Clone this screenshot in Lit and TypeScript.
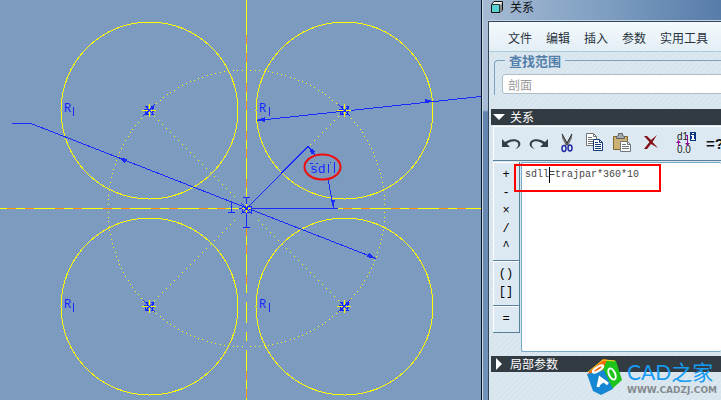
import { LitElement, html, svg, css } from "lit";
import { customElement } from "lit/decorators.js";

const CENTERS = [
  [149, 110],
  [344, 110],
  [149, 306],
  [344, 306],
];

const dot = (x: number, y: number) => `M${Math.round(x)} ${Math.round(y)}.5h1`;

function constructionDots(): string {
  const dots: string[] = [];
  const steps = 196;
  for (let i = 0; i < steps; i++) {
    const a = (i / steps) * Math.PI * 2;
    dots.push(dot(246 + 138.5 * Math.cos(a), 208 + 138.5 * Math.sin(a)));
  }
  for (let d = 12; d < 96; d += 4) {
    dots.push(dot(246 + d, 208 + d), dot(246 - d, 208 - d));
    dots.push(dot(246 + d, 208 - d), dot(246 - d, 208 + d));
  }
  return dots.join("");
}

@customElement("sketch-canvas")
class SketchCanvas extends LitElement {
  static styles = css`
    :host { display: block; overflow: hidden; background: #7d9abf; }
    svg { display: block; shape-rendering: crispEdges; fill: none; }
    .yellow { stroke: #ffff00; }
    .orange { stroke: #ff9900; }
    .blue { stroke: #1a2aff; }
    .arrow { fill: #1a2aff; }
    .red { stroke: #f20d0d; stroke-width: 2; shape-rendering: auto; }
    .base { stroke: #7d9abf; stroke-width: 3; }
    text { fill: #1a2aff; font: 12px "Liberation Mono", monospace; }
    .dim { font-size: 13px; }
  `;

  render() {
    return html`
      <svg width="721" height="400" viewBox="0 0 721 400" role="img" aria-label="Sketch">
        <g class="yellow">
          ${CENTERS.map(([x, y]) => svg`<circle cx=${x + 0.5} cy=${y + 0.5} r="88.5" />`)}
          <path d=${constructionDots()} />
          <path d="M0 208.5H721M246.5 0V400" />
        </g>
        <path class="orange" stroke-dasharray="9 9 9 21" d="M7 208.5H721M246.5 35V290M246.5 371V400" />
        <path class="base" d="M246.5 293V302M246.5 323V332M246.5 341V350" />
        <g class="blue">
          <path d="M12 123.5H31L376 258.5" />
          <path d="M257 120.5 L490 95.5" />
          <path d="M308 146.5 246.5 208.5H338" />
          <path d="M308 146.5 316 156M328 179 333.5 208" />
          <path d="M231.5 202V212M228 212.5H235M243 197.5H250M246.5 198V228M243 227.5H250" />
          <path d="M239 208.5H254M241 203 252 214M252 203 241 214M242 206H251V212H242Z" />
          ${CENTERS.map(
            ([x, y], i) => svg`<g transform="translate(${x} ${y})">
              <path d=${i === 1 || i === 2 ? "M-6-6 6 6" : "M-6 6 6-6"} />
              <path d="M-4-4H-1M2-4H4V-1M-4 1V4H0M2 4H5M-5-1H-2M3 1H5M-3-3 4 4M-3 4 4-3M-2-4V4M3-4V5" />
            </g>`,
          )}
        </g>
        <g class="yellow">
          ${CENTERS.map(
            ([x, y]) => svg`<path transform="translate(${x} ${y})" d="M-7 .5H-1M2 .5H7M.5-6V-1M.5 2V7" />`,
          )}
          <path d="M246.5 204V207M246.5 210V213M242 208.5H245M248 208.5H251" />
        </g>
        <path
          class="arrow"
          d="M257 120 265 117V122ZM433 101 425 99V103ZM118 157 127 159 125 163ZM376 259 367 257 369 253ZM308 146 315 151 312 155ZM333 208 331 200H335Z"
        />
        ${CENTERS.map(
          ([x, y]) => svg`<text x=${x < 200 ? 64 : 259} y=${y + 2}>R</text>
            <path class="blue" d="M${x < 200 ? 73.5 : 269.5} ${y - 3}v9" />`,
        )}
        <text class="dim" x="310" y="173">sd</text>
        <path class="blue" d="M328.5 164V173M334.5 162V173M310 163.5H313M316 163.5H318M330 162.5H331" />
        <ellipse class="red" cx="322.5" cy="167" rx="18" ry="12.5" />
      </svg>
    `;
  }
}

const ICONS = {
  undo: svg`<path fill="#333d47" d="M2 7V15H10L7 12C10 9 16 8 18 11C19 14 17 16 15 17C20 16 22 12 19 9C16 6 9 7 5 10Z"/>`,
  redo: svg`<path fill="#333d47" d="M20 7V15H12L15 12C12 9 6 8 4 11C3 14 5 16 7 17C2 16 0 12 3 9C6 6 13 7 17 10Z"/>`,
  cut: svg`<path fill="#777" d="M6 1 12 12 10 14 6 6ZM16 1 10 12 12 14 16 6Z"/><path stroke="#333" d="M6 2 12 13M16 2 10 13"/>
    <g stroke="#2029a0" stroke-width="1.5"><ellipse cx="8" cy="16.5" rx="2" ry="3"/><ellipse cx="14" cy="16" rx="2" ry="3"/></g>`,
  copy: svg`<path fill="#fff" stroke="#707478" d="M2.5 1.5H9.5L12.5 4.5V13.5H2.5Z"/><path stroke="#707478" d="M9.5 1.5V4.5H12.5M4 5.5H8M4 7.5H9M4 9.5H9M4 11.5H9"/>
    <path fill="#fff" stroke="#123a78" d="M9.5 7.5H15.5L18.5 10.5V18.5H9.5Z"/><path stroke="#123a78" d="M15.5 7.5V10.5H18.5M11 10.5H14M11 12.5H17M11 14.5H17M11 16.5H17"/>`,
  paste: svg`<path fill="#cbb173" stroke="#80652f" d="M1.5 4.5H15.5V17.5H1.5Z"/><path fill="#a6aaae" stroke="#5c6268" d="M4.5 6.5V4.5L6.5 3.5V1.5H10.5V3.5L12.5 4.5V6.5Z"/>
    <path fill="#fff" stroke="#70777d" d="M8.5 9.5H15.5L18.5 12.5V19.5H8.5Z"/><path stroke="#70777d" d="M15.5 9.5V12.5H18.5M10 12.5H14M10 14.5H17M10 16.5H17"/>`,
  remove: svg`<path fill="#850d14" d="M4 4H7L11 8 17 3 12.5 10 18 16 11 12 7 17H4L9.5 10Z"/>`,
};

type IconName = keyof typeof ICONS;

const TOOLS: [IconName, string][] = [
  ["undo", "撤消"],
  ["redo", "重做"],
  ["cut", "剪切"],
  ["copy", "复制"],
  ["paste", "粘贴"],
  ["remove", "删除"],
];

@customElement("relations-dialog")
class RelationsDialog extends LitElement {
  static styles = css`
    :host {
      display: flex;
      flex-direction: column;
      box-sizing: border-box;
      overflow: hidden;
      border-left: 1px solid #0b141e;
      background: linear-gradient(90deg, #a6bbd3, #7f9fc2 50%, #587ca9) top / 100% 20px no-repeat,
        linear-gradient(#a9bdd5, #a7bbd3 110px, #6384ae 112px, #7392b7);
      box-shadow: inset 1px 0 #c8d9ea;
      padding-left: 6px;
      font: 12px/16px "Noto Sans CJK SC", sans-serif;
      color: #27323b;
    }
    button, input, textarea { font: inherit; color: inherit; border: 0; padding: 0; margin: 0; background: none; outline: 0; }
    svg { display: block; fill: none; flex: none; }
    .title { display: flex; align-items: flex-start; gap: 6px; height: 20px; padding-left: 2px; color: #111; line-height: 14px; border-bottom: 1px solid #c3d3e3; white-space: nowrap; }
    h1, h2 { font: inherit; margin: 0; }
    .body {
      flex: 1;
      min-height: 0;
      overflow: hidden;
      border: solid #33475b;
      border-width: 1px 0 0 1px;
      background: repeating-linear-gradient(135deg, #d7e4ee 0 2px, #dce8f0 2px 4px);
    }
    .menu {
      display: flex;
      gap: 14px;
      height: 29px;
      padding-left: 19px;
      border-bottom: 1px solid #a9cad9;
      background: linear-gradient(#f4fafd, #e3eef5);
      overflow: hidden;
    }
    .menu button, h2, h1 { white-space: nowrap; }
    .menu button { padding-top: 2px; flex: none; }
    fieldset {
      margin: 0 -8px 14px 5px;
      height: 43px;
      box-sizing: border-box;
      min-width: 0;
      padding: 5px 0 0 7px;
      border: 1px solid #7ba2c1;
      border-bottom: 0;
      border-radius: 4px 4px 0 0;
    }
    legend { padding: 0 4px; margin-left: 3px; color: #527ea9; font-weight: bold; font-size: 13px; line-height: 17px; }
    .range { display: block; box-sizing: border-box; width: 100%; height: 20px; padding-left: 5px; border: 1px solid #aebcc4; border-radius: 3px; background: #fff; }
    .range::placeholder { color: #999; opacity: 1; }
    .section { display: flex; align-items: center; gap: 5px; height: 16px; margin-left: 2px; padding-left: 2px; background: #323b42; color: #fff; }
    .tools {
      display: flex;
      align-items: center;
      height: 34px;
      margin: 1px 0 1px 4px;
      padding-left: 4px;
      border: solid #568097;
      border-width: 0 0 1px;
      box-shadow: inset 1px 1px #fff;
      background: #dce9f2;
    }
    .tools button { display: grid; place-items: center; flex: none; width: 28px; height: 30px; }
    .tools .values { margin-left: 4px; }
    .split { align-self: stretch; width: 1px; margin-left: 3px; background: #568097; box-shadow: 1px 0 #fff; }
    .work { display: flex; align-items: flex-start; gap: 1px; margin: 1px 0 4px 4px; }
    .ops { flex: none; width: 27px; }
    .group {
      display: flex;
      flex-direction: column;
      padding: 4px 0;
      border: solid #568097;
      border-width: 0 1px 1px 0;
      box-shadow: inset 1px 1px #fff;
      background: #dce9f2;
      color: #000;
      font: 12px/18px "Liberation Mono", monospace;
    }
    .editor { position: relative; flex: 1; min-width: 0; height: 190px; box-sizing: border-box; border: solid #75abca; border-width: 1px 0 1px 1px; border-radius: 2px; background: #fff; }
    textarea { display: block; box-sizing: border-box; width: 100%; height: 100%; padding: 4px 3px; resize: none; font: 10px/16px "Liberation Mono", monospace; color: #444; }
    .caret { position: absolute; left: 27px; top: 4px; width: 1px; height: 16px; background: #000; }
    .mark { position: absolute; left: -8px; top: 1px; width: 143px; height: 24px; border: 2px solid #f00; }
  `;

  render() {
    return html`
      <div class="title">
        <svg width="14" height="14" viewBox="0 0 14 14">
          <path fill="#e7f2ec" stroke="#111" d="M1.5 4.5 4 1.5H12.5V10L10 12.5H1.5Z" />
          <path fill="#58d4d2" d="M2 5H9V12H2Z" /><path fill="#858d8d" d="M10 5 12 3V10L10 12Z" />
          <path stroke="#333" d="M2 4.5H9.5V12" />
        </svg>
        <h1>关系</h1>
      </div>
      <div class="body">
        <nav class="menu">
          ${["文件", "编辑", "插入", "参数", "实用工具"].map((t) => html`<button>${t}</button>`)}
        </nav>
        <fieldset>
          <legend>查找范围</legend>
          <input class="range" aria-label="查找范围" placeholder="剖面" />
        </fieldset>
        <div class="section">
          <svg width="12" height="12"><path fill="#fff" d="M0 3H12L6 9Z" /></svg>
          <h2>关系</h2>
        </div>
        <div class="tools">
          ${TOOLS.map(
            ([name, label]) => html`<button aria-label=${label}>
              <svg width="22" height="22" viewBox="0 0 22 22">${ICONS[name]}</svg>
            </button>`,
          )}
          <span class="split"></span>
          <button class="values" aria-label="切换尺寸">
            <svg width="24" height="24" viewBox="0 0 24 24">
              <g fill="#222" font-family="Liberation Sans, sans-serif" font-size="10">
                <text x="3" y="9">d1</text><text x="3" y="22">0.0</text>
              </g>
              <path stroke="#980d98" d="M4.5 15V10M13.5 5V13M12 4.5H14" />
              <path fill="#980d98" d="M2 12 4.5 9 7 12ZM11 12H16L13.5 15Z" />
              <path fill="#0c3485" d="M16 1H22V10H16Z" /><path fill="#fff" d="M18 2H20V3H18ZM17 4H20V8H21V9H17V8H18V5H17Z" />
            </svg>
          </button>
          <button aria-label="计算">
            <svg width="24" height="22" viewBox="0 0 24 22">
              <text x="4" y="17" fill="#111" font-family="Liberation Sans, sans-serif" font-size="15" font-weight="bold">=?</text>
            </svg>
          </button>
        </div>
        <div class="work">
          <div class="ops">
            ${[["+", "-", "×", "/", "^"], ["()", "[]"], ["="]].map(
              (g) => html`<div class="group">${g.map((o) => html`<button>${o}</button>`)}</div>`,
            )}
          </div>
          <div class="editor">
            <textarea aria-label="关系" spellcheck="false" .value=${"sdll=trajpar*360*10"}></textarea>
            <span class="caret"></span>
            <span class="mark"></span>
          </div>
        </div>
        <div class="section">
          <svg width="12" height="12"><path fill="#fff" d="M3 0 9 6 3 12Z" /></svg>
          <h2>局部参数</h2>
        </div>
      </div>
    `;
  }
}

@customElement("app-root")
class AppRoot extends LitElement {
  static styles = css`
    :host { display: flex; position: relative; height: 100vh; overflow: hidden; }
    sketch-canvas { flex: 1; min-width: 0; }
    relations-dialog { flex: none; width: 240px; }
    .brand { position: absolute; right: 4px; bottom: 4px; display: flex; align-items: center; gap: 4px; white-space: nowrap; }
    .brand svg { display: block; }
    .name { font: 21px/26px Lato, "Noto Sans CJK SC", sans-serif; color: #159bf3; }
    .url { font: bold 9px/11px "DejaVu Sans", sans-serif; color: #858a8e; }
  `;

  render() {
    return html`
      <sketch-canvas></sketch-canvas>
      <relations-dialog></relations-dialog>
      <div class="brand">
        <svg width="38" height="38" viewBox="0 0 38 38">
          <path fill="#f26b0b" d="M18 1 31 3 17 15 2 18 4 14Z" />
          <path fill="#1dc51a" d="M22 2 31 3 37 22 27 31 17 14Z" />
          <path fill="#1687d2" d="M2 16 19 12 28 31 16 37 8 33Z" />
          <path fill="none" stroke="#f7d51b" d="M3 14 18 2 30 3" />
          <ellipse cx="13" cy="11" rx="6" ry="2" transform="rotate(-32 13 11)" fill="none" stroke="#fff" stroke-width="2" />
          <ellipse cx="27" cy="16" rx="3" ry="6" transform="rotate(-25 27 16)" fill="none" stroke="#fff" stroke-width="2" />
          <path fill="none" stroke="#fff" stroke-width="3" d="M13 29 15 20 23 26M14 26 19 22" />
        </svg>
        <div>
          <div class="name">CAD之家</div>
          <div class="url">WWW.CADZJ.COM</div>
        </div>
      </div>
    `;
  }
}
